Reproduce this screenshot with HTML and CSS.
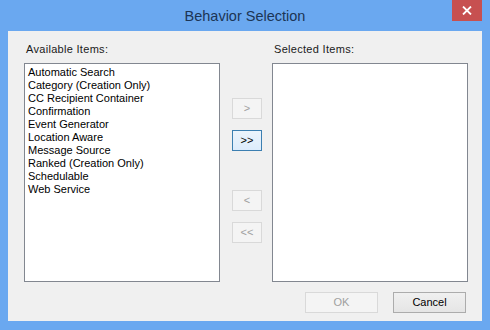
FILE: index.html
```html
<!DOCTYPE html>
<html>
<head>
	<title>Behavior Selection</title>
<link rel="stylesheet" href="styles.css">
</head>
<body>
	<div class="window">
		<div class="titlebar">
			<span class="title">Behavior Selection</span>
			<div class="close">
				<svg width="10" height="9" viewBox="0 0 10 9"><path d="M1 0.5 L9 8.5 M9 0.5 L1 8.5" stroke="#fff" stroke-width="1.8"/></svg>
			</div>
		</div>
		<div class="client">
			<div class="picker">
				<div class="label">Available Items:</div>
				<div></div>
				<div class="label">Selected Items:</div>

				<div class="listbox">
					<div class="item">Automatic Search</div>
					<div class="item">Category (Creation Only)</div>
					<div class="item">CC Recipient Container</div>
					<div class="item">Confirmation</div>
					<div class="item">Event Generator</div>
					<div class="item">Location Aware</div>
					<div class="item">Message Source</div>
					<div class="item">Ranked (Creation Only)</div>
					<div class="item">Schedulable</div>
					<div class="item">Web Service</div>
				</div>
				<div class="movers">
					<button class="btn small" disabled>&gt;</button>
					<button class="btn small focus">&gt;&gt;</button>
					<button class="btn small gap" disabled>&lt;</button>
					<button class="btn small" disabled>&lt;&lt;</button>
				</div>
				<div class="listbox"></div>
			</div>
			<div class="footer">
				<button class="btn wide" disabled>OK</button>
				<button class="btn wide">Cancel</button>
			</div>
		</div>
	</div>
</body>
</html>
```

FILE: styles.css
```css
body {
	margin: 0;
	font-family: "Liberation Sans", Arial, sans-serif;
	font-size: 11px;
	color: #000;
}

.window {
	width: 490px;
	height: 330px;
	background: #6aa8f0;
	display: flex;
	flex-direction: column;
	position: relative;
}

.titlebar {
	height: 31px;
	display: flex;
	align-items: center;
	justify-content: center;
}

.title {
	font-size: 14.5px;
	color: #1c3555;
	margin-top: 1px;
}

.close {
	position: absolute;
	top: 0;
	right: 8px;
	width: 30px;
	height: 21px;
	background: #c75050;
	display: flex;
	align-items: center;
	justify-content: center;
}

.client {
	flex: 1;
	margin: 0 8px 9px 8px;
	background: #f0f0f0;
	padding: 11px 14px 0 16px;
	display: flex;
	flex-direction: column;
}

.picker {
	display: grid;
	grid-template-columns: 196px 52px 196px;
	grid-template-rows: 21px 219px;
}

.label {
	line-height: 14px;
	padding-left: 2px;
	letter-spacing: 0.3px;
	color: #1a1a1a;
}

.listbox {
	background: #fff;
	border: 1px solid #828790;
	padding: 2px 3px;
}

.item {
	line-height: 13px;
	white-space: nowrap;
}

.movers {
	display: flex;
	flex-direction: column;
	align-items: flex-start;
	padding: 35px 0 0 12px;
}

.btn {
	font-family: inherit;
	font-size: 11px;
	background: linear-gradient(#f0f0f0, #e5e5e5);
	border: 1px solid #acacac;
	border-radius: 0;
	color: #000;
	padding: 0;
	height: 21px;
	line-height: 17px;
}

.btn:disabled {
	background: #f4f4f4;
	border-color: #d9d9d9;
	color: #a0a0a0;
}

.btn.focus {
	border-color: #3c7fb1;
	background: linear-gradient(#ecf4fc, #dcecfc);
}

.small {
	width: 30px;
	margin-bottom: 11px;
}

.small.gap {
	margin-top: 28px;
}

.wide {
	width: 73px;
}

.footer {
	display: flex;
	justify-content: flex-end;
	gap: 15px;
	padding: 10px 2px 0 0;
}
```
